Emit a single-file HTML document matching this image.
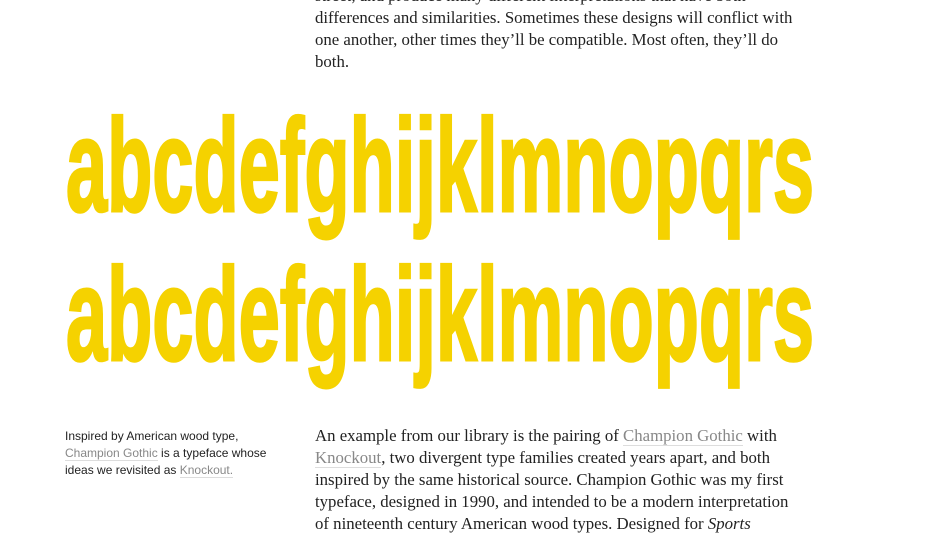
<!DOCTYPE html>
<html><head><meta charset="utf-8"><style>
body{margin:0;width:939px;height:538px;overflow:hidden;background:#fff;position:relative}
.p{position:absolute;left:315px;width:540px;font-family:"Liberation Serif",serif;font-size:16.8px;line-height:22px;color:#222}
.p a{color:#888;text-decoration:none;border-bottom:1px solid #ddd}
.s{position:absolute;left:65px;top:428px;width:230px;font-family:"Liberation Sans",sans-serif;font-size:12px;line-height:17px;color:#222}
.s a{color:#888;text-decoration:none;border-bottom:1px solid #ddd}
svg{position:absolute;left:0;top:0}
</style></head><body>
<div class="p" style="top:-15px">street, and produce many different interpretations that have both<br>differences and similarities. Sometimes these designs will conflict with<br>one another, other times they’ll be compatible. Most often, they’ll do<br>both.</div>
<svg width="939" height="400"><g fill="#f5d200" stroke="#f5d200" stroke-width="3" font-family="Liberation Sans,sans-serif" font-weight="bold" font-size="132">
<text x="66" y="211" textLength="748" lengthAdjust="spacingAndGlyphs">abcdefghijklmnopqrs</text>
<text x="66" y="360" textLength="748" lengthAdjust="spacingAndGlyphs">abcdefghijklmnopqrs</text>
</g></svg>
<div class="s">Inspired by American wood type,<br><a>Champion Gothic</a> is a typeface whose<br>ideas we revisited as <a>Knockout.</a></div>
<div class="p" style="top:425px">An example from our library is the pairing of <a>Champion Gothic</a> with<br><a>Knockout</a>, two divergent type families created years apart, and both<br>inspired by the same historical source. Champion Gothic was my first<br>typeface, designed in 1990, and intended to be a modern interpretation<br>of nineteenth century American wood types. Designed for <i>Sports</i></div>
</body></html>
